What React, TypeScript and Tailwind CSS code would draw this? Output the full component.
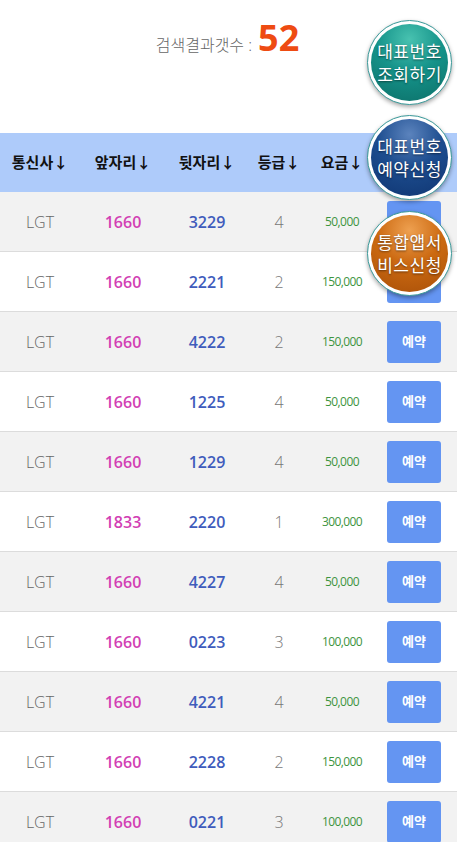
const rows = [
  { carrier: 'LGT', front: '1660', back: '3229', grade: 4, price: '50,000' },
  { carrier: 'LGT', front: '1660', back: '2221', grade: 2, price: '150,000' },
  { carrier: 'LGT', front: '1660', back: '4222', grade: 2, price: '150,000' },
  { carrier: 'LGT', front: '1660', back: '1225', grade: 4, price: '50,000' },
  { carrier: 'LGT', front: '1660', back: '1229', grade: 4, price: '50,000' },
  { carrier: 'LGT', front: '1833', back: '2220', grade: 1, price: '300,000' },
  { carrier: 'LGT', front: '1660', back: '4227', grade: 4, price: '50,000' },
  { carrier: 'LGT', front: '1660', back: '0223', grade: 3, price: '100,000' },
  { carrier: 'LGT', front: '1660', back: '4221', grade: 4, price: '50,000' },
  { carrier: 'LGT', front: '1660', back: '2228', grade: 2, price: '150,000' },
  { carrier: 'LGT', front: '1660', back: '0221', grade: 3, price: '100,000' },
];

const headers = ['통신사↓', '앞자리↓', '뒷자리↓', '등급↓', '요금↓'];

const FloatButton = ({ lines, fill, top }: { lines: string[]; fill: string; top: string }) => {
  return (
    <div className={`absolute right-[5px] ${top} w-[85px] h-[85px] rounded-full border border-[#3a9a9a] bg-white p-[3px] shadow-[0_2px_4px_rgba(0,0,0,0.35)]`}>
      <div className={`w-full h-full rounded-full ${fill} flex flex-col items-center justify-center text-white text-[17px] leading-[23px] tracking-[0.5px] [text-shadow:0_1px_2px_rgba(0,0,0,0.5)]`}>
        {lines.map((l) => (
          <span key={l}>{l}</span>
        ))}
      </div>
    </div>
  );
};

const App = () => {
  return (
    <div className="relative w-[457px] min-h-[842px] bg-white font-['Open_Sans','Noto_Sans_CJK_KR',sans-serif] overflow-hidden">
      {/* result count */}
      <div className="h-[133px] flex justify-center pt-[18px] pr-[2px]">
        <div className="flex items-baseline gap-[6px] h-[44px]">
          <span className="text-[16px] text-[#666] font-light">검색결과갯수 :</span>
          <span className="text-[36px] leading-[40px] font-bold text-[#ee4b12]">52</span>
        </div>
      </div>

      {/* header */}
      <div className="grid grid-cols-[80px_86px_82px_62px_64px_83px] h-[59px] bg-[#aecbfa] items-center text-[15px] font-bold text-[#111]">
        {headers.map((h) => (
          <div key={h} className="text-center">{h}</div>
        ))}
        <div />
      </div>

      {/* rows */}
      {rows.map((r, i) => (
        <div
          key={i}
          className={`grid grid-cols-[80px_86px_82px_62px_64px_83px] h-[60px] items-center border-b border-[#dcdcdc] ${
            i % 2 === 0 ? 'bg-[#f2f2f2]' : 'bg-white'
          }`}
        >
          <div className="text-center text-[16px] font-light text-[#666]">{r.carrier}</div>
          <div className="text-center text-[16px] font-semibold text-[#d23fb4]">{r.front}</div>
          <div className="text-center text-[16px] font-semibold text-[#3f5cbc]">{r.back}</div>
          <div className="text-center text-[16px] font-light text-[#777]">{r.grade}</div>
          <div className="text-center text-[12px] text-[#3d9440] tracking-[-0.6px]">{r.price}</div>
          <div className="flex justify-start pl-[13px]">
            <button className="w-[54px] h-[42px] rounded-[3px] bg-[#6495f2] text-white text-[13px] font-bold">예약</button>
          </div>
        </div>
      ))}

      <FloatButton
        top="top-[20px]"
        lines={['대표번호', '조회하기']}
        fill="bg-[radial-gradient(circle_at_50%_20%,#48c2b0_0%,#15938a_45%,#0c6f68_100%)]"
      />
      <FloatButton
        top="top-[115px]"
        lines={['대표번호', '예약신청']}
        fill="bg-[radial-gradient(circle_at_50%_20%,#5b83bd_0%,#1d4d8f_45%,#0f3571_100%)]"
      />
      <FloatButton
        top="top-[211px]"
        lines={['통합앱서', '비스신청']}
        fill="bg-[radial-gradient(circle_at_50%_20%,#eea050_0%,#cc6a12_45%,#a84f08_100%)]"
      />
    </div>
  );
};

export default App;
